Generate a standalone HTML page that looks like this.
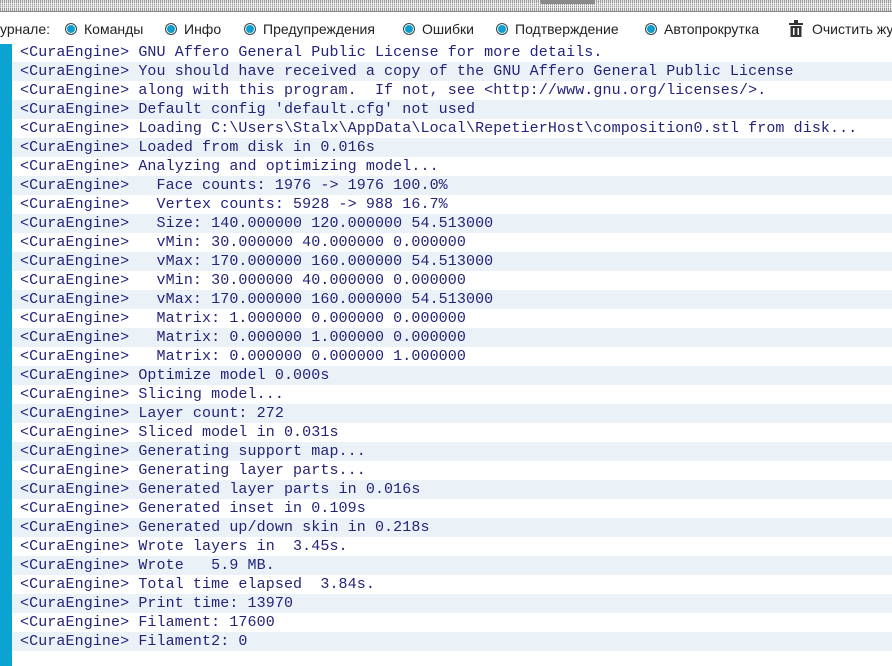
<!DOCTYPE html>
<html><head><meta charset="utf-8"><style>
body{margin:0;width:892px;height:666px;overflow:hidden;background:#fff;position:relative;font-family:"Liberation Sans",sans-serif}
.top{position:absolute;left:0;top:0;width:892px;height:11px;background:repeating-linear-gradient(90deg,#9a9a9a 0 1px,#e8e8e8 1px 2px);border-bottom:1px solid #888}
.top:after{content:"";position:absolute;left:0;top:2px;width:892px;height:7px;background:repeating-linear-gradient(0deg,transparent 0 1px,rgba(255,255,255,.5) 1px 2px)}
.grip{position:absolute;left:541px;top:0;width:54px;height:4px;background:#8a8a8a;z-index:2}
.tb{position:absolute;top:19px;font-size:14px;color:#222;white-space:nowrap;line-height:20px}
.r{position:absolute;top:23px;width:10px;height:10px;border-radius:50%;background:#0a9fd0;border:1.5px solid #444;box-shadow:inset 0 0 0 1px #fff}
.bar{position:absolute;left:0;top:44px;width:12px;height:622px;background:#0aa3d2}
.log{position:absolute;left:12px;top:43px;width:880px;font-family:"Liberation Mono",monospace;font-size:15px;letter-spacing:0.1px;color:#23237a}
.log div{height:19px;line-height:19px;padding-left:8px;white-space:pre}
.log div:nth-child(even){background:#eaf2f8}
</style></head><body>
<div class="top"></div><div class="grip"></div>
<div class="tb" style="left:0">урнале:</div>
<div class="r" style="left:65px"></div><div class="tb" style="left:84px">Команды</div>
<div class="r" style="left:165px"></div><div class="tb" style="left:184px">Инфо</div>
<div class="r" style="left:244px"></div><div class="tb" style="left:263px">Предупреждения</div>
<div class="r" style="left:403px"></div><div class="tb" style="left:422px">Ошибки</div>
<div class="r" style="left:496px"></div><div class="tb" style="left:515px">Подтверждение</div>
<div class="r" style="left:645px"></div><div class="tb" style="left:664px">Автопрокрутка</div>
<svg style="position:absolute;left:789px;top:20px" width="14" height="17" viewBox="0 0 14 17"><rect x="0" y="3" width="14" height="2" fill="#333"/><rect x="5" y="0" width="4" height="3" fill="#333"/><rect x="1.5" y="6" width="11" height="11" fill="#333"/><rect x="4" y="8" width="1.5" height="7" fill="#fff"/><rect x="8.5" y="8" width="1.5" height="7" fill="#fff"/></svg>
<div class="tb" style="left:812px">Очистить жу</div>
<div class="bar"></div>
<div class="log">
<div>&lt;CuraEngine&gt; GNU Affero General Public License for more details.</div>
<div>&lt;CuraEngine&gt; You should have received a copy of the GNU Affero General Public License</div>
<div>&lt;CuraEngine&gt; along with this program.  If not, see &lt;http://www.gnu.org/licenses/&gt;.</div>
<div>&lt;CuraEngine&gt; Default config 'default.cfg' not used</div>
<div>&lt;CuraEngine&gt; Loading C:\Users\Stalx\AppData\Local\RepetierHost\composition0.stl from disk...</div>
<div>&lt;CuraEngine&gt; Loaded from disk in 0.016s</div>
<div>&lt;CuraEngine&gt; Analyzing and optimizing model...</div>
<div>&lt;CuraEngine&gt;   Face counts: 1976 -&gt; 1976 100.0%</div>
<div>&lt;CuraEngine&gt;   Vertex counts: 5928 -&gt; 988 16.7%</div>
<div>&lt;CuraEngine&gt;   Size: 140.000000 120.000000 54.513000</div>
<div>&lt;CuraEngine&gt;   vMin: 30.000000 40.000000 0.000000</div>
<div>&lt;CuraEngine&gt;   vMax: 170.000000 160.000000 54.513000</div>
<div>&lt;CuraEngine&gt;   vMin: 30.000000 40.000000 0.000000</div>
<div>&lt;CuraEngine&gt;   vMax: 170.000000 160.000000 54.513000</div>
<div>&lt;CuraEngine&gt;   Matrix: 1.000000 0.000000 0.000000</div>
<div>&lt;CuraEngine&gt;   Matrix: 0.000000 1.000000 0.000000</div>
<div>&lt;CuraEngine&gt;   Matrix: 0.000000 0.000000 1.000000</div>
<div>&lt;CuraEngine&gt; Optimize model 0.000s</div>
<div>&lt;CuraEngine&gt; Slicing model...</div>
<div>&lt;CuraEngine&gt; Layer count: 272</div>
<div>&lt;CuraEngine&gt; Sliced model in 0.031s</div>
<div>&lt;CuraEngine&gt; Generating support map...</div>
<div>&lt;CuraEngine&gt; Generating layer parts...</div>
<div>&lt;CuraEngine&gt; Generated layer parts in 0.016s</div>
<div>&lt;CuraEngine&gt; Generated inset in 0.109s</div>
<div>&lt;CuraEngine&gt; Generated up/down skin in 0.218s</div>
<div>&lt;CuraEngine&gt; Wrote layers in  3.45s.</div>
<div>&lt;CuraEngine&gt; Wrote   5.9 MB.</div>
<div>&lt;CuraEngine&gt; Total time elapsed  3.84s.</div>
<div>&lt;CuraEngine&gt; Print time: 13970</div>
<div>&lt;CuraEngine&gt; Filament: 17600</div>
<div>&lt;CuraEngine&gt; Filament2: 0</div>
</div>
</body></html>
